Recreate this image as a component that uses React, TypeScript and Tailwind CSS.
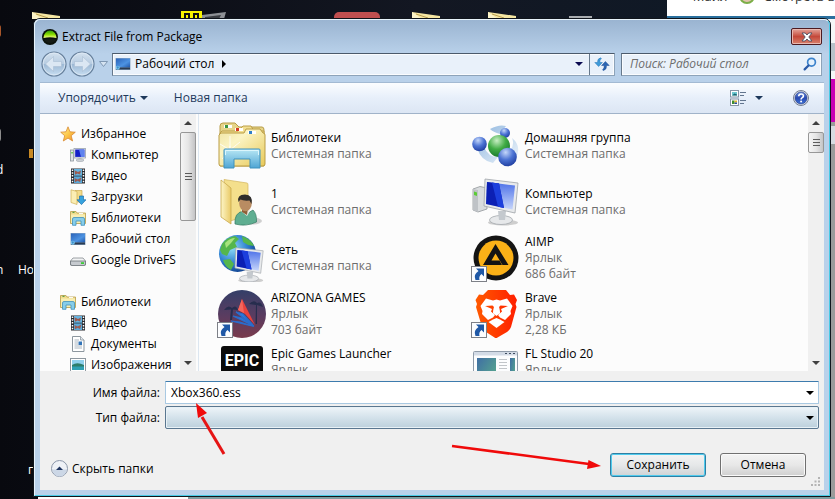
import { useState } from "react";
import type { ReactNode } from "react";

interface TreeItem {
  id: string;
  label: string;
  icon: ReactNode;
}

interface FileItem {
  name: string;
  lines: string[];
  icon: ReactNode;
  shortcut?: boolean;
}

function AppIcon() {
  return (
    <svg viewBox="0 0 16 16" className="size-4">
      <defs>
        <linearGradient id="appGlow" x1="0" y1="0" x2="0" y2="1">
          <stop offset="0" stopColor="#2f9a0c" />
          <stop offset=".55" stopColor="#8fe000" />
          <stop offset="1" stopColor="#f8ff8a" />
        </linearGradient>
      </defs>
      <circle cx="8" cy="8" r="8" fill="#0b120b" />
      <path d="M1.500 9A6.500 7.500 0 0 1 14.500 9Q8 7.500 1.500 9Z" fill="url(#appGlow)" />
      <path d="M2 10.500Q8 9 14 10.500A6.500 5.500 0 0 1 2 10.500Z" fill="#151b15" />
    </svg>
  );
}

function NavArrow({ back }: { back?: boolean }) {
  return (
    <svg viewBox="0 0 26 26" className={back ? "size-[26px]" : "size-[26px] -scale-x-100"}>
      <defs>
        <linearGradient id="orb" x1="0" y1="0" x2="0" y2="1">
          <stop offset="0" stopColor="#d5e2ef" />
          <stop offset=".48" stopColor="#b8cde2" />
          <stop offset=".52" stopColor="#9db9d5" />
          <stop offset="1" stopColor="#c9dff2" />
        </linearGradient>
      </defs>
      <circle cx="13" cy="13" r="12" fill="url(#orb)" stroke="#67809c" strokeWidth="1.200" />
      <circle cx="13" cy="13" r="10.900" fill="none" stroke="#dfeaf5" strokeOpacity=".8" />
      <path
        d="M4.500 13L12.500 5.500V10.500H20.500V15.500H12.500V20.500Z"
        fill="#dbe7f3"
        stroke="#a9bed4"
        strokeWidth=".6"
        strokeLinejoin="round"
      />
    </svg>
  );
}

function DesktopIcon() {
  return (
    <svg viewBox="0 0 16 16" className="size-4">
      <defs>
        <linearGradient id="deskBg" x1="0" y1="0" x2="1" y2="1">
          <stop offset="0" stopColor="#2a62b8" />
          <stop offset=".6" stopColor="#4d93e2" />
          <stop offset="1" stopColor="#1f55a8" />
        </linearGradient>
      </defs>
      <rect x=".5" y="2" width="15" height="12" fill="#8fa9c4" />
      <rect x="1" y="2.500" width="14" height="9" fill="url(#deskBg)" />
      <rect x="1" y="11.500" width="14" height="2" fill="#2b3c52" />
      <circle cx="2.800" cy="11.800" r="2" fill="#7fd0f5" />
      <path d="M1.500 11.200h2.600M2.800 10.300v3" stroke="#2468b0" strokeWidth=".6" />
    </svg>
  );
}

function RefreshIcon() {
  return (
    <svg viewBox="0 0 16 16" className="size-4">
      <path d="M6.800 1.800Q3.400 2.200 3.500 6.500H.8L4.600 10.500L8.400 6.500H5.800Q5.600 3.800 7.400 2.600Z" fill="#3f9bd8" stroke="#2474b8" strokeWidth=".5" />
      <path d="M9.200 14.600Q12.700 14 12.500 9.500H15.200L11.400 5.500L7.600 9.500H10.200Q10.500 12.300 8.600 13.800Z" fill="#2c66b4" stroke="#1d4c94" strokeWidth=".5" />
    </svg>
  );
}

function SearchIcon() {
  return (
    <svg viewBox="0 0 14 14" className="size-[14px]" fill="none">
      <circle cx="8.500" cy="5.200" r="3.900" fill="#e4f1fc" stroke="#3c83cc" strokeWidth="1.700" />
      <path d="M5.500 8.500L1.600 12.400" stroke="#2a5ba8" strokeWidth="2.200" strokeLinecap="round" />
    </svg>
  );
}

function ViewIcon() {
  return (
    <svg viewBox="0 0 17 16" className="h-4 w-[17px]">
      <rect x=".5" y=".5" width="8" height="6.500" fill="#fff" stroke="#8794a5" />
      <rect x="2" y="2" width="5" height="3.500" fill="#6ec8d0" />
      <path d="M2 5.500L4.500 3.500L7 4.500V5.500Z" fill="#1b6470" />
      <rect x=".5" y="9" width="8" height="6.500" fill="#fff" stroke="#8794a5" />
      <rect x="2" y="10.500" width="2.500" height="3.500" fill="#3f8e2e" />
      <rect x="4.500" y="10.500" width="2.500" height="2" fill="#e5b52a" />
      <rect x="4.500" y="12.500" width="2.500" height="1.500" fill="#2b4b9c" />
      <path d="M10 2.500h6M10 5.500h4M10 10.500h6M10 13.500h4" stroke="#62758e" />
    </svg>
  );
}

function HelpIcon() {
  return (
    <svg viewBox="0 0 16 16" className="size-4">
      <defs>
        <linearGradient id="helpBg" x1="0" y1="0" x2="0" y2="1">
          <stop offset="0" stopColor="#6d90de" />
          <stop offset=".5" stopColor="#2748b0" />
          <stop offset="1" stopColor="#3f74d8" />
        </linearGradient>
      </defs>
      <circle cx="8" cy="8" r="7.500" fill="#dfe4ee" stroke="#747d90" />
      <circle cx="8" cy="8" r="6" fill="url(#helpBg)" stroke="#24377e" strokeWidth=".6" />
      <path d="M5.700 6.300Q5.800 4 8.100 4T10.400 6.100Q10.400 7.200 9 7.900Q8.100 8.400 8.100 9.400" fill="none" stroke="#fff" strokeWidth="1.600" />
      <circle cx="8.100" cy="11.600" r="1" fill="#fff" />
    </svg>
  );
}

function StarIcon() {
  return (
    <svg viewBox="0 0 16 16" className="size-4">
      <defs>
        <linearGradient id="star" x1="0" y1="0" x2="1" y2="1">
          <stop offset="0" stopColor="#fff3a8" />
          <stop offset=".5" stopColor="#fcc84a" />
          <stop offset="1" stopColor="#f08a2c" />
        </linearGradient>
      </defs>
      <path d="M8 .8L10 5.800L15.300 6.200L11.200 9.700L12.600 15L8 12.100L3.300 15L4.700 9.700L.7 6.200L6 5.800Z" fill="url(#star)" stroke="#d98a32" strokeWidth=".8" strokeLinejoin="round" />
    </svg>
  );
}

function SmallComputerIcon() {
  return (
    <svg viewBox="0 0 16 16" className="size-4">
      <rect x=".5" y="3" width="3" height="11" fill="#dfe3e6" stroke="#8b949c" strokeWidth=".8" />
      <rect x="1.300" y="5" width="1.500" height="1.500" fill="#50c838" />
      <rect x="4" y="1.500" width="11.500" height="9.500" fill="#e9ecf0" stroke="#9aa3ad" strokeWidth=".8" />
      <rect x="5.200" y="2.500" width="9.200" height="7.400" fill="#1420c8" />
      <path d="M9 2.500H14.400V9.900H11Z" fill="#5e83ee" />
      <path d="M8.500 11h3v1.500h-3z" fill="#b9bfc6" />
      <ellipse cx="10" cy="13.200" rx="4" ry="1.300" fill="#cfd4d9" stroke="#98a0a8" strokeWidth=".6" />
    </svg>
  );
}

function FilmIcon() {
  return (
    <svg viewBox="0 0 16 16" className="size-4">
      <rect x="1" y=".5" width="14" height="15" fill="#26292e" />
      <rect x="4" y="1" width="8" height="6.700" fill="#66b4e0" />
      <rect x="4" y="8.400" width="8" height="6.600" fill="#5aa8d8" />
      <path d="M4.500 2.200L8 4L11 2.600L10 6.400L7.500 5.500L5 6.800ZM4.500 10L7.500 11.500L11.500 9.600L10 14L7.500 12.700L5 14.200Z" fill="#9c5b50" />
      <path d="M2.500 1.500V15M13.500 1.500V15" stroke="#fff" strokeWidth="1.500" strokeDasharray="1.500 1.300" />
    </svg>
  );
}

function DownloadsIcon() {
  return (
    <svg viewBox="0 0 16 16" className="size-4">
      <path d="M5 1.500H12V13H5Z" fill="#f3dc8b" stroke="#c9a94e" strokeWidth=".7" />
      <path d="M1 .8L7 2.500V15.500L1 13.500Z" fill="#fbeeb4" stroke="#cfb055" strokeWidth=".7" />
      <path d="M9.500 7H13.500V10.800H16L11.500 15.600L7 10.800H9.500Z" fill="#37a3de" stroke="#1a6fae" strokeWidth=".7" />
    </svg>
  );
}

function SmallLibraryIcon() {
  return (
    <svg viewBox="0 0 16 16" className="size-4">
      <path d="M.5 3V1.500H6L7 3H15.500V13.500H.5Z" fill="#f0dc8c" stroke="#b89d49" strokeWidth=".8" />
      <path d="M1 4.500H15V13H1Z" fill="#f8eeb2" />
      <path d="M2.500 2.300h2" stroke="#3a9440" />
      <path d="M9 3.600h4" stroke="#fff" />
      <path d="M2.500 15.300V9Q2.500 7.500 4 7.500H13Q14.500 7.500 14.500 9V15.300H11V11H6V15.300Z" fill="#86cdea" stroke="#3f91bd" strokeWidth=".8" />
    </svg>
  );
}

function LibraryIcon() {
  return (
    <svg viewBox="0 0 48 48" className="size-12">
      <defs>
        <linearGradient id="libFolder" x1="0" y1="0" x2="1" y2="1">
          <stop offset="0" stopColor="#f0e4a4" />
          <stop offset=".35" stopColor="#fbf4c4" />
          <stop offset="1" stopColor="#e8c958" />
        </linearGradient>
        <linearGradient id="libStand" x1="0" y1="0" x2="0" y2="1">
          <stop offset="0" stopColor="#b9e8f5" />
          <stop offset="1" stopColor="#4fa5d4" />
        </linearGradient>
      </defs>
      <path d="M2 44V4Q2 1 5 1H17L21 5H44Q46 5 46 8V44Z" fill="#e6d489" stroke="#b89d49" />
      <path d="M2 11L4 9H20L23 6L25 4H33L36 9H46V43H2Z" fill="#f2df91" stroke="#bda04a" />
      <path d="M1 13L3 11H26L28 7H42L45 11Q47 11 47 13V42Q47 44 45 44H3Q1 44 1 42Z" fill="url(#libFolder)" stroke="#bb9d45" />
      <rect x="6" y="3" width="8" height="3" fill="#fff" />
      <rect x="7" y="3" width="3" height="3" fill="#3a9440" />
      <rect x="17" y="6" width="8" height="3" fill="#fff" />
      <rect x="18" y="6" width="3" height="3" fill="#d43a24" />
      <rect x="30" y="9" width="8" height="3" fill="#fff" />
      <rect x="31" y="9" width="3" height="3" fill="#2f7fc8" />
      <path d="M12 24L10 42M12 28L2 22M12 28L4 37M12 28L22 20M12 28L12 14" stroke="#fff" strokeWidth=".8" />
      <path d="M6 28Q6 27 7 27H41Q42 27 42 28V46H32V37H16V46H6Z" fill="url(#libStand)" stroke="#3f91bd" />
      <path d="M7.500 33V28.500H40.500V33" fill="none" stroke="#dcf6fc" />
    </svg>
  );
}

function DriveIcon() {
  return (
    <svg viewBox="0 0 16 16" className="size-4">
      <path d="M3 6H13L15.500 9V13H.5V9Z" fill="#f2f3f4" stroke="#858b91" strokeWidth=".8" />
      <path d="M.5 9H15.500V12Q15.500 13.500 14 13.500H2Q.5 13.500 .5 12Z" fill="#c6cacf" stroke="#6d7378" strokeWidth=".8" />
      <rect x="11" y="10.200" width="3" height="1.800" fill="#3ccc38" />
    </svg>
  );
}

function DocumentIcon() {
  return (
    <svg viewBox="0 0 16 16" className="size-4">
      <path d="M2.500 .5H10.500L14 4V15.500H2.500Z" fill="#fff" stroke="#8d979f" />
      <path d="M10.500 .5V4H14" fill="#e3e8ec" stroke="#8d979f" strokeWidth=".8" />
      <path d="M4.500 4H9M4.500 6H8M4.500 8H8M4.500 10H12M4.500 12H12" stroke="#98a4b1" strokeWidth=".8" />
      <rect x="8.500" y="5.500" width="3.500" height="3.500" fill="#3274b8" />
    </svg>
  );
}

function PictureIcon() {
  return (
    <svg viewBox="0 0 16 16" className="size-4">
      <rect x=".5" y="1.500" width="15" height="13" fill="#fff" stroke="#8d979f" />
      <rect x="2" y="3" width="12" height="10" fill="#8fd0ee" />
      <path d="M2 8Q7 4.500 14 8V10H2Z" fill="#2e7d6b" />
      <path d="M2 9.500H14V13H2Z" fill="#2fa0b4" />
    </svg>
  );
}

function UserFolderIcon() {
  return (
    <svg viewBox="0 0 48 48" className="size-12">
      <defs>
        <linearGradient id="flap" x1="0" y1="0" x2="1" y2="0">
          <stop offset="0" stopColor="#fdf5c6" />
          <stop offset="1" stopColor="#e9ca67" />
        </linearGradient>
      </defs>
      <path d="M6 1.500L29 5Q30 5 30 7V38L12 43Z" fill="#f4df8c" stroke="#d2b45c" strokeWidth=".7" />
      <path d="M3 2L13 10V46L3 39Z" fill="url(#flap)" stroke="#c9a84c" strokeWidth=".8" />
      <ellipse cx="34" cy="43" rx="10" ry="3.500" fill="#8c8c8c" opacity=".4" />
      <path d="M17 46Q16 35 25 33L30 35L35 32Q39 36 38.500 44Q28 49 17 46Z" fill="#5fae91" stroke="#357a62" strokeWidth=".7" />
      <path d="M23 33L29 38L32 33L29 29H24Z" fill="#e9eee9" />
      <path d="M24 27V34L29 37L30 30Z" fill="#8f6038" />
      <ellipse cx="27.500" cy="25.500" rx="6.300" ry="7.800" fill="#b98c62" />
      <path d="M20.500 24Q18.500 16.500 27 16.500Q35.500 17 33.500 26L31.500 22.500Q25 23 22.500 21.500Z" fill="#2f2d2b" />
    </svg>
  );
}

function Screen() {
  return (
    <g>
      <ellipse cx="31" cy="44.500" rx="15" ry="3" fill="#777" opacity=".35" />
      <ellipse cx="29" cy="42" rx="11.500" ry="4.500" fill="#e6e8ea" stroke="#a3a8ad" strokeWidth=".8" />
      <path d="M26 33H34L33 42H27Z" fill="#c4c9ce" />
      <path d="M13 1L46 5L43 35L12 28Z" fill="#e8eaec" stroke="#9ea3a8" strokeWidth=".8" />
      <path d="M15 4L43 7.500L40.500 31.500L14 26Z" fill="url(#screenBlue)" />
      <path d="M15 4L27 5.500L32 30L14 26Z" fill="#0c20b4" />
      <path d="M20 4.600L27 5.500L32 30L26 28.700Z" fill="#1c3fdd" />
    </g>
  );
}

function ScreenDefs() {
  return (
    <defs>
      <linearGradient id="screenBlue" x1="0" y1="0" x2="0" y2="1">
        <stop offset="0" stopColor="#4a6fe8" />
        <stop offset="1" stopColor="#c6d5fa" />
      </linearGradient>
      <radialGradient id="globe" cx=".35" cy=".35" r=".7">
        <stop offset="0" stopColor="#8fdcf8" />
        <stop offset=".6" stopColor="#2f7fd0" />
        <stop offset="1" stopColor="#12418e" />
      </radialGradient>
    </defs>
  );
}

function ComputerIcon() {
  return (
    <svg viewBox="0 0 48 48" className="size-12">
      <ScreenDefs />
      <path d="M1 11L8 8.500L15 10V31L6 34L1 32Z" fill="#d9dcde" stroke="#92979b" strokeWidth=".8" />
      <path d="M1 11L6 12V34L1 32Z" fill="#bfc3c7" />
      <path d="M2 13.500L5 14.500V18L2 17Z" fill="#5ccc36" />
      <Screen />
    </svg>
  );
}

function NetworkIcon() {
  return (
    <svg viewBox="0 0 48 48" className="size-12">
      <ScreenDefs />
      <circle cx="19.500" cy="19.500" r="18.500" fill="url(#globe)" />
      <path d="M4 10Q9 3 17 2L21 5L17 9L19 13L12 16L9 22L4 20L2 16ZM24 2Q33 5 36 12L30 11L25 8ZM5 26L12 25L16 30L13 36Q7 33 5 26Z" fill="#55b64c" />
      <path d="M7 9Q12 4 17 4L13 9L8 14Z" fill="#a6e37e" />
      <g transform="translate(7 13) scale(.83 .75)">
        <Screen />
      </g>
    </svg>
  );
}

function HomegroupIcon() {
  return (
    <svg viewBox="0 0 48 48" className="size-12">
      <defs>
        <radialGradient id="ballBlue" cx=".4" cy=".25" r=".8">
          <stop offset="0" stopColor="#c4d7fa" />
          <stop offset=".5" stopColor="#4d74d4" />
          <stop offset="1" stopColor="#1c3a9c" />
        </radialGradient>
        <radialGradient id="ballGreen" cx=".4" cy=".25" r=".8">
          <stop offset="0" stopColor="#c8efc4" />
          <stop offset=".5" stopColor="#41ac45" />
          <stop offset="1" stopColor="#14742a" />
        </radialGradient>
        <linearGradient id="swoosh" x1="0" y1="0" x2="1" y2="1">
          <stop offset="0" stopColor="#8fb6de" />
          <stop offset="1" stopColor="#eef5fb" />
        </linearGradient>
      </defs>
      <path d="M18 7Q27 2 34 4L28 12Q21 10 18 7ZM5 26Q9 39 21 41L26 35Q16 35 12 25ZM40 16Q50 24 44 36L38 29Q43 22 40 16Z" fill="url(#swoosh)" />
      <circle cx="33" cy="11" r="5" fill="url(#ballBlue)" />
      <circle cx="7.500" cy="22" r="7.300" fill="url(#ballBlue)" />
      <circle cx="27" cy="24" r="11" fill="url(#ballGreen)" />
      <circle cx="35.500" cy="35" r="9.300" fill="url(#ballBlue)" />
    </svg>
  );
}

function AimpIcon() {
  return (
    <svg viewBox="0 0 48 48" className="size-12">
      <circle cx="24" cy="24" r="22.500" fill="#141414" />
      <circle cx="24" cy="24" r="17.500" fill="#fbb117" />
      <path fillRule="evenodd" d="M23.500 10L36.500 31H30.500L23.500 19.500L19.500 26.500H27.500L30 31H11Z" fill="#141414" />
    </svg>
  );
}

function ArizonaIcon() {
  return (
    <svg viewBox="0 0 48 48" className="size-12">
      <defs>
        <linearGradient id="azBg" x1="0" y1="0" x2="0" y2="1">
          <stop offset="0" stopColor="#343f68" />
          <stop offset=".55" stopColor="#5b3c60" />
          <stop offset="1" stopColor="#7a3a4c" />
        </linearGradient>
      </defs>
      <circle cx="24" cy="24" r="24" fill="url(#azBg)" />
      <path d="M6 20Q10 14 14 18Q18 14 20 20L15 19.500L14 30H12L13 19.500ZM31 14Q36 9 39 13Q43 11 45 17L39 15V34H37.500L38 15Z" fill="#272d4e" />
      <path d="M24 9L37 35L27 24L20 20Z" fill="#e8423e" />
      <path d="M24 9L26 23L20 20Z" fill="#f4665c" />
      <path d="M18 22L25 24L35 35ZM15 26L24 28L36 36ZM13 31L22 32L36 36.500Z" fill="#2d7de0" stroke="#2a6ccc" strokeWidth="1.200" />
    </svg>
  );
}

function EpicIcon() {
  return (
    <svg viewBox="0 0 48 48" className="size-12">
      <path d="M6 0H42Q45 0 45 3V40L24 48L3 40V3Q3 0 6 0Z" fill="#0b0b0b" />
      <text x="24" y="20" textAnchor="middle" className="fill-white font-['Liberation_Sans_Narrow','Roboto',sans-serif] text-[16px] font-bold">
        EPIC
      </text>
    </svg>
  );
}

function BraveIcon() {
  return (
    <svg viewBox="0 0 48 48" className="size-12">
      <defs>
        <linearGradient id="brave" x1="0" y1="0" x2="1" y2="0">
          <stop offset="0" stopColor="#ff5a00" />
          <stop offset="1" stopColor="#ff1f00" />
        </linearGradient>
      </defs>
      <path d="M16 0H34L38 5L42 4.500L45 10L43.500 14L44.500 17L39 37Q38 40 35 42L25.500 47.500Q24 48.500 22.500 47.500L14 42Q11 40 10 37L4 17L5 14L3.500 10L7 4.500L11 5Z" fill="url(#brave)" />
      <path d="M14 8.500L21 10.500L24.500 9.500L28 10.500L35 8.500L40.500 16L38.500 21L39 24L33 30L28 27.500L26 25L30 21.500L29 19L36 16L28.500 15.500L27 17L28 23L24.500 25L21 23L22 17L20.500 15.500L13 16L20 19L19 21.500L23 25L21 27.500L16 30L10 24L10.500 21L8.500 16Z" fill="#fff" />
      <path d="M24.500 28L28 29.500L32.500 32L24.500 38L16.500 32L21 29.500Z" fill="#fff" />
      <path d="M22 17H27L28 23L24.500 26L21 23Z" fill="#fff" />
    </svg>
  );
}

function FlIcon() {
  return (
    <svg viewBox="0 0 48 48" className="size-12">
      <defs>
        <linearGradient id="flPane" x1="0" y1="0" x2="1" y2="1">
          <stop offset="0" stopColor="#3f6ea4" />
          <stop offset="1" stopColor="#5cb489" />
        </linearGradient>
      </defs>
      <rect x="1.500" y="5.500" width="44" height="38" rx="1" fill="#fcfdfe" stroke="#8f9ba9" />
      <rect x="2" y="6" width="43" height="3.500" fill="#d3dbe6" />
      <path d="M33 7.500h2M37 7.500h2M41 7.500h2" stroke="#3d4c5f" />
      <rect x="5" y="12" width="19" height="28" fill="url(#flPane)" />
      <path d="M27 13.500h8M27 16.500h8M27 19.500h8M27 22.500h8M27 25.500h8" stroke="#c1c5c9" />
      <rect x="38" y="12" width="5" height="28" fill="url(#flPane)" />
    </svg>
  );
}

function ShortcutBadge() {
  return (
    <svg viewBox="0 0 16 16" className="absolute bottom-0 -left-px size-4">
      <rect x=".5" y=".5" width="15" height="15" fill="#fcfdff" stroke="#7d8087" />
      <path d="M5 2.500H13V10.500L10.500 8Q7.500 10.500 8.500 14H4.500Q2 8.500 7.500 5Z" fill="#1f58a6" />
    </svg>
  );
}

function Caret({ className }: { className?: string }) {
  return (
    <svg viewBox="0 0 8 4" className={`h-1 w-2 ${className ?? ""}`}>
      <path d="M0 0H8L4 4Z" fill="currentColor" />
    </svg>
  );
}

const favorites: TreeItem[] = [
  { id: "computer", label: "Компьютер", icon: <SmallComputerIcon /> },
  { id: "video", label: "Видео", icon: <FilmIcon /> },
  { id: "downloads", label: "Загрузки", icon: <DownloadsIcon /> },
  { id: "libs", label: "Библиотеки", icon: <SmallLibraryIcon /> },
  { id: "desktop", label: "Рабочий стол", icon: <DesktopIcon /> },
  { id: "gdrive", label: "Google DriveFS", icon: <DriveIcon /> },
];

const libraries: TreeItem[] = [
  { id: "lib-video", label: "Видео", icon: <FilmIcon /> },
  { id: "lib-docs", label: "Документы", icon: <DocumentIcon /> },
  { id: "lib-pics", label: "Изображения", icon: <PictureIcon /> },
];

const files: FileItem[] = [
  { name: "Библиотеки", lines: ["Системная папка"], icon: <LibraryIcon /> },
  { name: "Домашняя группа", lines: ["Системная папка"], icon: <HomegroupIcon /> },
  { name: "1", lines: ["Системная папка"], icon: <UserFolderIcon /> },
  { name: "Компьютер", lines: ["Системная папка"], icon: <ComputerIcon /> },
  { name: "Сеть", lines: ["Системная папка"], icon: <NetworkIcon /> },
  { name: "AIMP", lines: ["Ярлык", "686 байт"], icon: <AimpIcon />, shortcut: true },
  { name: "ARIZONA GAMES", lines: ["Ярлык", "703 байт"], icon: <ArizonaIcon />, shortcut: true },
  { name: "Brave", lines: ["Ярлык", "2,28 КБ"], icon: <BraveIcon />, shortcut: true },
  { name: "Epic Games Launcher", lines: ["Ярлык"], icon: <EpicIcon />, shortcut: true },
  { name: "FL Studio 20", lines: ["Ярлык"], icon: <FlIcon />, shortcut: true },
];

function TreeGroup({ title, icon, items }: { title: string; icon: ReactNode; items: TreeItem[] }) {
  return (
    <section>
      <h2 className="flex h-[21px] items-center gap-[5px] pl-5 whitespace-nowrap">
        {icon}
        {title}
      </h2>
      <ul>
        {items.map((item) => (
          <li key={item.id}>
            <button className="flex h-[21px] w-full items-center gap-[5px] pl-[30px] whitespace-nowrap">
              {item.icon}
              {item.label}
            </button>
          </li>
        ))}
      </ul>
    </section>
  );
}

function Scrollbar({ thumb }: { thumb: string }) {
  return (
    <div className="flex w-4 shrink-0 flex-col bg-[#f0f0f0]">
      <button aria-label="Вверх" className="flex h-[18px] items-center justify-center text-[#404040]">
        <Caret className="rotate-180" />
      </button>
      <div className={`flex flex-col items-center justify-center gap-[2px] rounded-[2px] border border-[#979797] bg-linear-to-r from-[#f5f5f5] via-[#e6e6e6] to-[#c4c4c6] ${thumb}`}>
        <span className="h-px w-[7px] bg-[#5c5c5c]" />
        <span className="h-px w-[7px] bg-[#5c5c5c]" />
        <span className="h-px w-[7px] bg-[#5c5c5c]" />
      </div>
      <button aria-label="Вниз" className="mt-auto flex h-[17px] items-center justify-center text-[#404040]">
        <Caret />
      </button>
    </div>
  );
}

function FolderTab({ className }: { className: string }) {
  return (
    <svg viewBox="0 0 28 7" className={`absolute top-3 h-[7px] w-7 ${className}`}>
      <path d="M0 0L28 4V7H0Z" fill="#f5e6a2" />
      <path d="M0 0L10 7H0Z" fill="#fbf3c8" />
      <path d="M4 2L16 6" stroke="#b99f52" />
    </svg>
  );
}

// the desktop and the browser window that lie behind the dialog
function Desktop() {
  return (
    <div className="absolute inset-0 overflow-hidden bg-linear-to-r from-[#08090f] via-[#131722] to-[#0d1a28] text-white">
      <FolderTab className="left-8" />
      <FolderTab className="left-[412px]" />
      <FolderTab className="left-[488px]" />
      <div className="absolute top-3 left-[334px] h-3 w-[46px] rounded-[5px] bg-[#c04f4f]" />
      <div className="absolute top-4 left-[569px] h-2 w-[23px] bg-[#a9adb0]" />
      <svg viewBox="0 0 46 8" className="absolute top-[11px] left-[181px] h-2 w-[46px]">
        <path d="M21 4L45 1L43 8H21Z" fill="#8d9095" />
        <path d="M24 6L40 4L38 8H24Z" fill="#3a3d42" />
        <path d="M0 0H21V8H0Z" fill="#f8f400" />
        <path d="M4 8V3H8V8M13 8V3H17V8" fill="none" stroke="#111" strokeWidth="2" />
      </svg>
      <div className="absolute top-[25px] -left-1 h-3 w-[5px] rounded-full bg-[#a8562a]" />
      <div className="absolute top-[127px] -left-2 h-4 w-[9px] rounded-full bg-[#8c8c8c]" />
      <div className="absolute top-[149px] left-[29px] h-[9px] w-1 bg-[#c98a24]" />
      <span className="absolute top-[162px] -left-1">d</span>
      <span className="absolute top-[262px] -left-1">n</span>
      <span className="absolute top-[262px] left-[18px]">Ho</span>
      <span className="absolute top-[462px] left-[28px]">г</span>
      <div className="absolute inset-y-0 right-0 left-[667px] bg-[#9b9b9b]">
        <div className="h-4 overflow-hidden bg-white text-[#333]">
          <div className="-mt-3 flex h-4 items-center pl-[15px] text-[13px] whitespace-nowrap">
            <svg viewBox="0 0 16 12" className="h-4 w-4">
              <path d="M1 0h4v12H1z" fill="#4285f4" />
              <path d="M11 0h4v12h-4z" fill="#34a853" />
            </svg>
            <span className="pl-2">Маил</span>
            <span className="ml-3 size-4 shrink-0 rounded-full border-2 border-[#7cae48] bg-[#e2c3ae]" />
            <span className="pl-2">Смотреть в</span>
          </div>
        </div>
        <div className="h-[3px] bg-[#2a6f9e]" />
        <div className="h-6 bg-[#f5f6f7]" />
        <div className="h-7 bg-[#b8c2ca]" />
        <div className="h-2 bg-[#f5f6f7]" />
        <div className="h-[43px] bg-[#c800b4]" />
        <div className="mt-1 h-[18px] bg-[#d8dbe2]" />
      </div>
      <div className="absolute right-0 bottom-0 left-[38px] h-[2px] bg-[#7f9ca0]" />
      <div className="absolute bottom-0 left-[38px] h-[2px] w-[150px] bg-white" />
    </div>
  );
}

export default function App() {
  const [fileName, setFileName] = useState("Xbox360.ess");

  return (
    <div className="relative flex h-screen flex-col overflow-hidden pt-[18px] pr-1 pb-[2px] pl-[33px] font-['Open_Sans','Noto_Sans',sans-serif] text-[12px] leading-4 text-black">
      <Desktop />

      <main className="relative flex min-h-0 flex-1 flex-col rounded-t-[7px] border border-[#10151c] bg-[#b9d1ea]">
        <div className="flex min-h-0 flex-1 flex-col rounded-t-[6px] border border-[#e8f4fc] border-r-[#49cbe6] border-b-[#49cbe6] bg-linear-to-b from-[#9ab4d1] to-[#b9d1ea] to-[34px] px-[5px] pb-[5px]">
          <header className="flex h-[29px] shrink-0 items-center gap-1 pt-1 pl-[2px]">
            <AppIcon />
            <h1 className="flex-1">Extract File from Package</h1>
            <button aria-label="Закрыть" className="mr-[2px] flex h-[17px] w-[31px] items-center justify-center rounded-[2px] border border-[#4d1a20] bg-linear-to-b from-[#e3a49b] via-[#c4483a] via-50% to-[#d8806c] shadow-[inset_0_0_0_1px_#e9b8b0]">
              <svg viewBox="0 0 12 10" className="h-[10px] w-3">
                <path d="M1 1H4.200L6 3L7.800 1H11L7.800 5L11 9H7.800L6 7L4.200 9H1L4.200 5Z" fill="#fff" stroke="#4a4f60" strokeWidth=".9" />
              </svg>
            </button>
          </header>

          <nav className="flex h-[30px] shrink-0 items-center pr-[2px] pl-px">
            <div className="flex items-center gap-[2px] rounded-full">
              <button aria-label="Назад">
                <NavArrow back />
              </button>
              <button aria-label="Вперёд">
                <NavArrow />
              </button>
            </div>
            <button aria-label="Последние страницы" className="mx-1">
              <svg viewBox="0 0 9 6" className="h-[6px] w-[9px]">
                <path d="M.5 .5H8.500L4.500 5.500Z" fill="#d5e3f1" stroke="#7f98b3" />
              </svg>
            </button>
            <div className="flex h-[23px] flex-1 border border-[#8da3b9] border-t-[#4b5a6b] border-l-[#66788b] bg-[#e9f1fa] shadow-[inset_0_0_0_1px_#fafcfe]">
              <button className="flex items-center gap-1 pl-[2px]">
                <DesktopIcon />
                Рабочий стол
                <svg viewBox="0 0 4 8" className="ml-1 h-2 w-1">
                  <path d="M0 0L4 4L0 8Z" />
                </svg>
              </button>
              <button aria-label="Предыдущие расположения" className="ml-auto px-[6px] text-[#0a0a50]">
                <Caret />
              </button>
              <button aria-label="Обновить" className="flex w-[25px] items-center justify-center border-l border-[#66788b]">
                <RefreshIcon />
              </button>
            </div>
            <label className="ml-[6px] flex h-[23px] w-[201px] items-center border border-[#8da3b9] border-t-[#4b5a6b] border-l-[#66788b] bg-[#e9f1fa] pr-1 pl-2 shadow-[inset_0_0_0_1px_#fafcfe]">
              <input
                aria-label="Поиск"
                placeholder="Поиск: Рабочий стол"
                className="min-w-0 flex-1 bg-transparent italic outline-none placeholder:text-[#6d6d6d]"
              />
              <SearchIcon />
            </label>
          </nav>

          <div className="mt-[3px] flex min-h-0 flex-1 flex-col bg-[#f0f0f0]">
            <div className="flex h-8 shrink-0 items-center border-t border-b border-t-[#a3bad3] border-b-[#a0b3c9] bg-linear-to-b from-[#fbfdff] via-[#e7effa] via-50% to-[#dce6f4] pr-[15px] pl-[18px] text-[#1e395b]">
              <button className="flex items-center gap-1">
                Упорядочить
                <Caret />
              </button>
              <button className="ml-[26px]">Новая папка</button>
              <button aria-label="Изменить представление" className="ml-auto flex items-center gap-2">
                <ViewIcon />
                <Caret />
              </button>
              <button aria-label="Справка" className="ml-[30px]">
                <HelpIcon />
              </button>
            </div>

            <div className="flex min-h-0 flex-1 bg-[#fcfcfc]">
              <aside className="flex w-[159px] shrink-0 overflow-hidden border-r border-[#dce6f0]">
                <div className="flex flex-1 flex-col gap-[21px] overflow-hidden pt-[9px]">
                  <TreeGroup title="Избранное" icon={<StarIcon />} items={favorites} />
                  <TreeGroup title="Библиотеки" icon={<SmallLibraryIcon />} items={libraries} />
                </div>
                <Scrollbar thumb="h-[89px]" />
                <div className="w-[2px] bg-[#fcfcfc]" />
              </aside>
              <ul className="grid min-w-0 flex-1 auto-rows-[56px] grid-cols-[repeat(auto-fill,254px)] overflow-hidden pt-1 pl-[19px]">
                {files.map((file) => (
                  <li key={file.name} className="flex items-center gap-[5px]">
                    <div className="relative shrink-0">
                      {file.icon}
                      {file.shortcut && <ShortcutBadge />}
                    </div>
                    <div className={file.shortcut ? "h-12" : ""}>
                      <p>{file.name}</p>
                      {file.lines.map((line) => (
                        <p key={line} className="text-[#6d6d6d]">{line}</p>
                      ))}
                    </div>
                  </li>
                ))}
              </ul>
              <Scrollbar thumb="h-[21px]" />
            </div>

            <form className="relative shrink-0 pt-[10px] pr-[5px]" onSubmit={(e) => e.preventDefault()}>
              <div className="grid grid-cols-[120px_1fr] items-center gap-x-[5px] gap-y-[2px]">
                <label htmlFor="fileName" className="text-right">Имя файла:</label>
                <div className="flex h-[23px] items-center rounded-[1px] border border-[#a9c9e2] border-t-[#3d7bad] bg-white">
                  <input
                    id="fileName"
                    value={fileName}
                    onChange={(e) => setFileName(e.target.value)}
                    className="min-w-0 flex-1 pl-[5px] outline-none"
                  />
                  <button type="button" aria-label="Список имён" className="px-1">
                    <Caret />
                  </button>
                </div>
                <label htmlFor="fileType" className="text-right">Тип файла:</label>
                <div className="flex h-[23px] items-center rounded-[2px] border border-[#5a7790] bg-linear-to-b from-[#eff5f9] via-[#d4e2eb] via-50% to-[#bcd0dc] shadow-[inset_0_0_0_1px_#e8f1f6]">
                  <select id="fileType" className="h-full min-w-0 flex-1 appearance-none pl-[5px] outline-none">
                    <option></option>
                  </select>
                  <Caret className="mx-1" />
                </div>
              </div>
              <div className="flex items-end pt-6 pr-[13px] pb-[13px] pl-[11px]">
                <button type="button" className="flex items-center gap-1">
                  <svg viewBox="0 0 17 17" className="size-[17px]">
                    <circle cx="8.500" cy="8.500" r="8" fill="#eef1f6" stroke="#8a96a8" />
                    <path d="M1.500 9.500H15.500A7 7 0 0 1 1.500 9.500Z" fill="#ccd7e6" />
                    <path d="M5 10L8.500 6.500L12 10Z" fill="#1f3560" />
                  </svg>
                  Скрыть папки
                </button>
                <button type="submit" className="ml-auto h-6 w-24 rounded-[3px] border border-[#2f7fa3] bg-linear-to-b from-[#f3f3f3] via-[#e6e8e9] via-50% to-[#cfd3d5] shadow-[inset_0_0_0_1px_#4fcbee]">
                  Сохранить
                </button>
                <button type="button" className="ml-[14px] h-6 w-[86px] rounded-[3px] border border-[#707070] bg-linear-to-b from-[#f3f3f3] via-[#e8e8e8] via-50% to-[#cfcfcf] shadow-[inset_0_0_0_1px_#fafafa]">
                  Отмена
                </button>
              </div>
              <svg viewBox="0 0 9 9" className="absolute right-1 bottom-1 size-[9px]" fill="#b4b4b4">
                <path d="M7 0h2v2H7zM7 3.500h2v2H7zM3.500 3.500h2v2h-2zM7 7h2v2H7zM3.500 7h2v2h-2zM0 7h2v2H0z" />
              </svg>
              {/* red hint arrows */}
              <svg viewBox="0 0 34 56" className="pointer-events-none absolute top-[30px] left-[153px] h-14 w-[34px]">
                <path d="M9 16L31 53" stroke="#e61414" strokeWidth="3" />
                <path d="M3 2L14 12L5 17Z" fill="#f00a0a" />
              </svg>
              <svg viewBox="0 0 152 28" className="pointer-events-none absolute top-[72px] right-[221px] h-7 w-[152px]">
                <path d="M1 3L138 21" stroke="#f00a0a" strokeWidth="2.500" />
                <path d="M150 23L136 26L137.500 17Z" fill="#f00a0a" />
              </svg>
            </form>
          </div>
        </div>
      </main>
    </div>
  );
}
